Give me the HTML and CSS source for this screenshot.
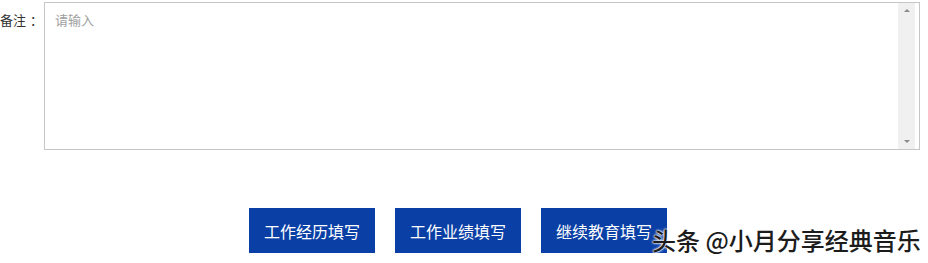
FILE: index.html
```html
<!DOCTYPE html>
<html>
<head>
    <title>备注</title>
    <meta charset="utf-8">
    <link rel="stylesheet" href="styles.css">
</head>
<body>
    <div class="form">
        <div class="row">
            <label class="label" for="remark">备注<span class="colon">：</span></label>
            <div class="box">
                <textarea id="remark" class="remark" placeholder="请输入"></textarea>
                <div class="scroll">
                    <span class="arrow up"></span>
                    <span class="arrow down"></span>
                </div>
            </div>
        </div>
        <div class="actions">
            <button class="btn">工作经历填写</button>
            <button class="btn">工作业绩填写</button>
            <button class="btn">继续教育填写</button>
        </div>
    </div>
    <div class="mark">头条 @小月分享经典音乐</div>
</body>
</html>
```

FILE: styles.css
```css
body {
    margin: 0;
    background-color: #fff;
    font-family: "Noto Sans CJK SC", "Liberation Sans", sans-serif;
    color: #333;
    position: relative;
    height: 263px;
    overflow: hidden;
}

.row {
    display: flex;
    padding-top: 2px;
}

.label {
    width: 44px;
    font-size: 13px;
    line-height: 14px;
    padding-top: 11px;
    color: #333;
    white-space: nowrap;
    overflow: hidden;
}

.colon {
    margin-left: 4px;
}

.box {
    display: flex;
    width: 874px;
    height: 146px;
    border: 1px solid #c6c6c6;
}

.remark {
    flex: 1;
    border: none;
    outline: none;
    resize: none;
    margin: 0;
    padding: 9px 10px;
    font-family: inherit;
    font-size: 13px;
    line-height: 16px;
}

.remark::placeholder {
    color: #a0a0a0;
}

.scroll {
    width: 17px;
    margin-right: 4px;
    background-color: #f0f0f0;
    display: flex;
    flex-direction: column;
    justify-content: space-between;
    align-items: center;
    padding: 6px 0;
}

.arrow {
    width: 0;
    height: 0;
    border-left: 3px solid transparent;
    border-right: 3px solid transparent;
}

.up {
    border-bottom: 3px solid #8a8a8a;
}

.down {
    border-top: 3px solid #8a8a8a;
}

.actions {
    display: flex;
    justify-content: center;
    gap: 20px;
    padding-right: 12px;
    margin-top: 58px;
}

.btn {
    width: 126px;
    height: 45px;
    border: none;
    background-color: #0a3fa6;
    color: #fff;
    font-family: inherit;
    font-size: 16px;
    padding: 0;
}

.mark {
    position: absolute;
    left: 652px;
    top: 224px;
    font-size: 24px;
    font-weight: 500;
    line-height: 32px;
    color: #1c1c1c;
    text-shadow: 0 0 2px #fff, 0 0 2px #fff, 0 0 3px #fff;
    white-space: nowrap;
}
```
